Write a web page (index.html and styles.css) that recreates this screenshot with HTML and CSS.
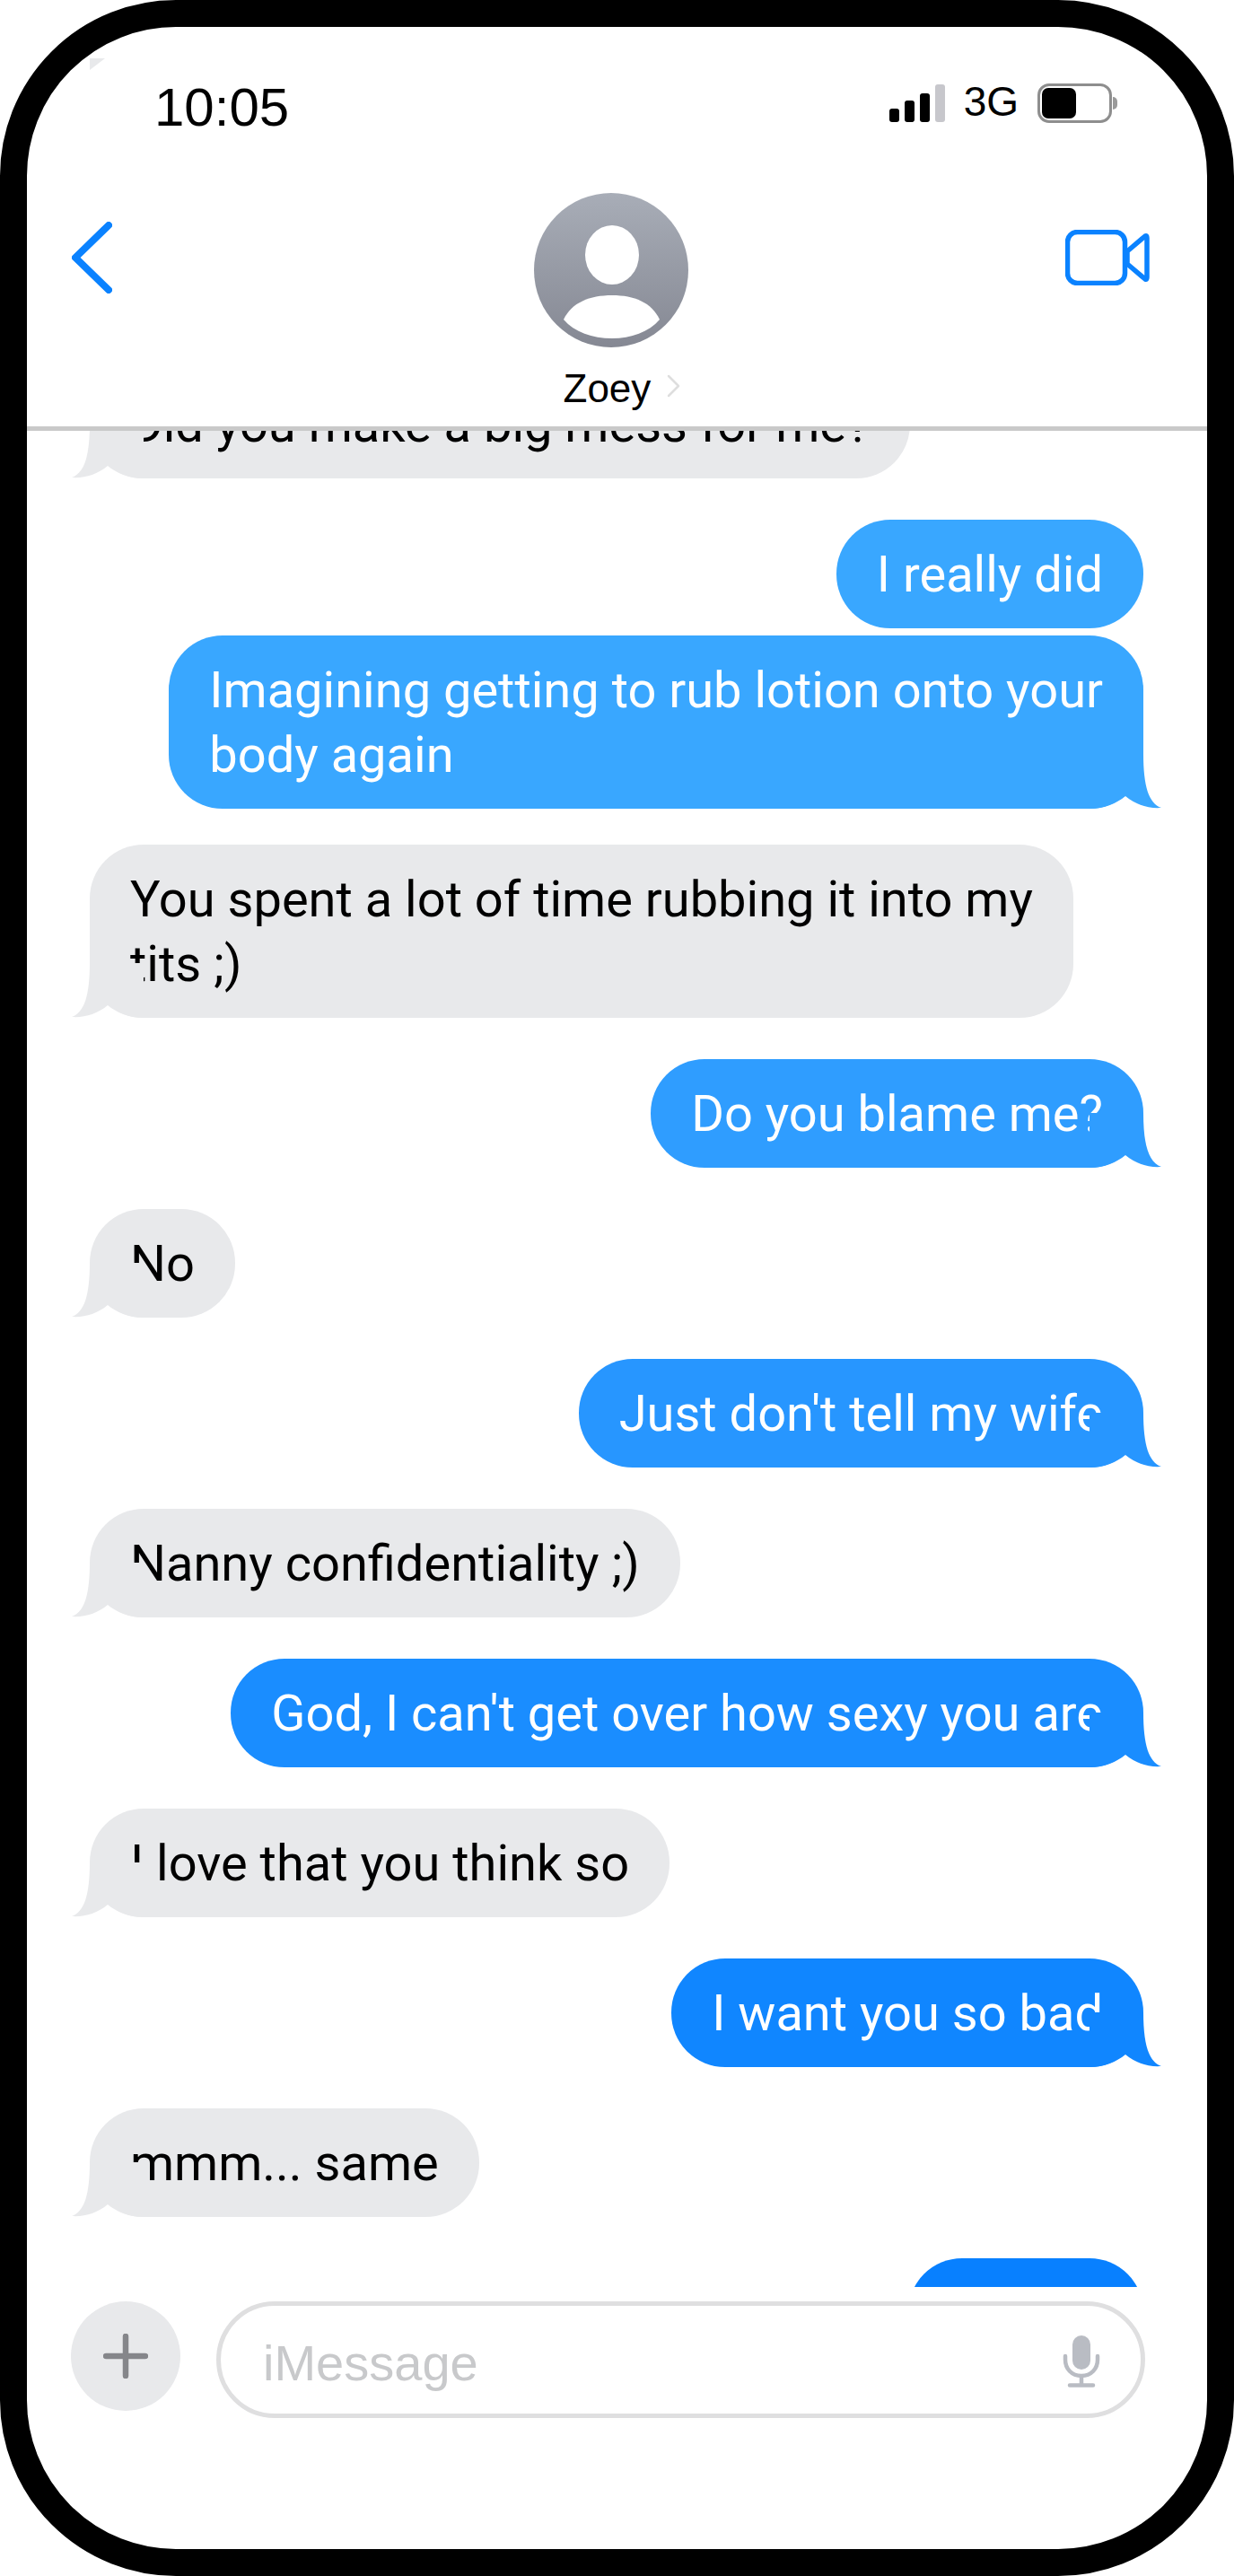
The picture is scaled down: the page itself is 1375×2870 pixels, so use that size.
FILE: index.html
```html
<!DOCTYPE html>
<html lang="en">
<head>
<meta charset="utf-8">
<title>Zoey</title>
<link rel="stylesheet" href="styles.css">
</head>
<body>
<svg class="defs" width="0" height="0" aria-hidden="true">
  <symbol id="tail" viewBox="0 0 80 61"><path d="M0 61C17 61 30 55 40 47C52 57 66 61 80 60C66 55 60 36 60 0L0 0Z"/></symbol>
</svg>
<div class="phone">
  <div class="sliver"></div>
  <header class="top">
    <div class="status">
      <span class="time">10:05</span>
      <div class="indicators">
        <div class="signal"><i class="bar b1"></i><i class="bar b2"></i><i class="bar b3"></i><i class="bar b4"></i></div>
        <span class="net">3G</span>
        <div class="battery"><div class="cell"><i class="charge"></i></div><i class="nub"></i></div>
      </div>
    </div>
    <nav class="nav">
      <svg class="back" width="45" height="80" viewBox="0 0 45 80"><path d="M41 4L4 40L41 76" transform="matrix(1 0 0 1 0 0)" fill="none" stroke="#0a82ff" stroke-width="8" stroke-linecap="round" stroke-linejoin="round"/></svg>
      <div class="contact">
        <svg class="avatar" width="172" height="172" viewBox="0 0 172 172">
          <defs>
            <linearGradient id="ag" x1="0" y1="0" x2="0" y2="1"><stop offset="0" stop-color="#a8adb7"/><stop offset="1" stop-color="#858893"/></linearGradient>
            <clipPath id="ac"><circle cx="86" cy="86" r="86"/></clipPath>
          </defs>
          <circle cx="86" cy="86" r="86" fill="url(#ag)"/>
          <ellipse cx="87" cy="69" rx="30" ry="33" fill="#fff"/>
          <path d="M33 141C42 122 62 114 87 114C112 114 131 122 140 141C128 155 108 162 87 162C65 162 45 155 33 141Z" fill="#fff"/>
        </svg>
        <div class="name-row">
          <span class="name">Zoey</span>
          <svg class="chev" width="15" height="26" viewBox="0 0 15 26"><path d="M2 2L13 13L2 24" fill="none" stroke="#dedede" stroke-width="2.5" stroke-linecap="round" stroke-linejoin="round"/></svg>
        </div>
      </div>
      <svg class="video" width="94" height="62" viewBox="0 0 94 62"><rect x="2.5" y="2.5" width="64" height="57" rx="11" fill="none" stroke="#0a82ff" stroke-width="5.5"/><path d="M69 24L89 7Q91 6 91 9L91 53Q91 56 89 55L69 38Z" fill="none" stroke="#0a82ff" stroke-width="5.5" stroke-linejoin="round"/></svg>
    </nav>
  </header>
  <main class="thread">
    <div class="list">
      <div class="bubble in">Did you make a big mess for me?<svg class="tail"><use href="#tail"/></svg></div>
      <div class="group">
        <div class="bubble out c1">I really did</div>
        <div class="bubble out c1">Imagining getting to rub lotion onto your<br>body again<svg class="tail"><use href="#tail"/></svg></div>
      </div>
      <div class="bubble in">You spent a lot of time rubbing it into my<br>tits ;)<svg class="tail"><use href="#tail"/></svg></div>
      <div class="bubble out c2">Do you blame me?<svg class="tail"><use href="#tail"/></svg></div>
      <div class="bubble in">No<svg class="tail"><use href="#tail"/></svg></div>
      <div class="bubble out c3">Just don't tell my wife<svg class="tail"><use href="#tail"/></svg></div>
      <div class="bubble in">Nanny confidentiality ;)<svg class="tail"><use href="#tail"/></svg></div>
      <div class="bubble out c4">God, I can't get over how sexy you are<svg class="tail"><use href="#tail"/></svg></div>
      <div class="bubble in">I love that you think so<svg class="tail"><use href="#tail"/></svg></div>
      <div class="bubble out c5">I want you so bad<svg class="tail"><use href="#tail"/></svg></div>
      <div class="bubble in">mmm... same<svg class="tail"><use href="#tail"/></svg></div>
      <div class="bubble out c6 last">&nbsp;</div>
    </div>
  </main>
  <footer class="composer">
    <div class="plus"><svg width="50" height="50" viewBox="0 0 50 50"><path d="M25 3V47M3 25H47" fill="none" stroke="#85868a" stroke-width="6.5" stroke-linecap="round"/></svg></div>
    <div class="field">
      <span class="placeholder">iMessage</span>
      <svg class="mic" width="42" height="58" viewBox="0 0 42 58"><rect x="11" y="0" width="20" height="38" rx="10" fill="#b9bcc3"/><path d="M3 23V27C3 37 10 45 21 45C32 45 39 37 39 27V23M21 45V55M8 55.5H34" fill="none" stroke="#b9bcc3" stroke-width="4.5" stroke-linecap="round"/></svg>
    </div>
  </footer>
</div>
</body>
</html>
```
FILE: styles.css
```css
* { box-sizing: border-box; }
html, body { margin: 0; padding: 0; background: #fff; }
.defs { display: block; height: 0; }
.phone {
  position: relative;
  width: 1375px;
  height: 2870px;
  border: 30px solid #000;
  border-radius: 196px;
  background: #fff;
  display: flex;
  flex-direction: column;
  overflow: hidden;
  font-family: "Liberation Sans", Arial, sans-serif;
  color: #000;
}
.sliver {
  position: absolute;
  left: 70px;
  top: 35px;
  width: 17px;
  height: 13px;
  background: #e8e9eb;
  clip-path: polygon(0 100%, 0 0, 100% 0);
}
.top {
  height: 450px;
  flex: none;
  border-bottom: 5px solid #c9c9c9;
  display: flex;
  flex-direction: column;
}
.status {
  height: 120px;
  padding: 60px 100px 0 142px;
  display: flex;
  justify-content: space-between;
  flex: none;
}
.time { font-size: 60px; line-height: 60px; }
.indicators { display: flex; align-items: flex-end; height: 44px; margin-top: 3px; }
.signal { display: flex; align-items: flex-end; gap: 6px; height: 42px; margin-bottom: 1px; }
.bar { display: block; width: 11px; border-radius: 3px; background: #000; }
.b1 { height: 15px; }
.b2 { height: 24px; }
.b3 { height: 32px; }
.b4 { height: 42px; background: #c7c7cc; }
.net { font-size: 46px; line-height: 46px; margin-left: 21px; margin-bottom: 1px; }
.battery { display: flex; align-items: center; margin-left: 21px; height: 44px; }
.cell { width: 83px; height: 44px; border: 3px solid #8e8e8e; border-radius: 13px; padding: 2px; }
.charge { display: block; width: 38px; height: 34px; background: #000; border-radius: 7px; }
.nub { display: block; width: 5px; height: 14px; background: #9a9a9a; border-radius: 0 5px 5px 0; margin-left: 1px; }
.nav {
  flex: 1;
  display: grid;
  grid-template-columns: 1fr 172px 1fr;
  padding: 0 64px 0 50px;
}
.back { margin-top: 97px; display: block; }
.contact { margin-top: 65px; }
.avatar { display: block; }
.name-row { display: flex; align-items: flex-start; padding-left: 33px; margin-top: 24px; white-space: nowrap; }
.name { font-size: 44px; line-height: 44px; }
.chev { display: block; margin: 6px 0 0 18px; flex: none; }
.video { justify-self: end; margin-top: 106px; display: block; }
.thread { height: 2068px; flex: none; overflow: hidden; padding: 0 71px 0 70px; }
.list { display: flex; flex-direction: column; gap: 46px; margin-top: -68px; }
.group { display: flex; flex-direction: column; gap: 8px; align-self: flex-end; align-items: flex-end; margin-bottom: -6px; }
.bubble {
  position: relative;
  width: fit-content;
  padding: 24.5px 45px;
  border-radius: 60px;
  font-family: Roboto, sans-serif;
  font-size: 56px;
  line-height: 72px;
  white-space: nowrap;
  --c: #e8e9eb;
  background: var(--c);
}
.in { align-self: flex-start; color: #000; }
.out { align-self: flex-end; color: #fff; }
.c1 { --c: #39a7ff; }
.c2 { --c: #2f9dff; }
.c3 { --c: #2796ff; }
.c4 { --c: #1a8dff; }
.c5 { --c: #1086ff; }
.c6 { --c: #0880ff; }
.last { width: 262px; }
.tail { position: absolute; bottom: 0; width: 80px; height: 61px; fill: var(--c); }
.out .tail { right: -20px; }
.in .tail { left: -20px; transform: scaleX(-1); }
.composer {
  flex: 1;
  display: flex;
  align-items: flex-start;
  gap: 40px;
  padding: 16px 69px 0 49px;
}
.plus {
  width: 122px;
  height: 122px;
  border-radius: 50%;
  background: #e8e9eb;
  display: flex;
  align-items: center;
  justify-content: center;
  flex: none;
}
.field {
  flex: 1;
  height: 130px;
  border: 5px solid #dfdfe0;
  border-radius: 65px;
  display: flex;
  align-items: center;
  justify-content: space-between;
  padding: 0 45px 0 47px;
}
.placeholder { font-size: 56px; line-height: 64px; color: #c8c9cb; margin-top: 8px; }
.mic { display: block; margin-top: 4px; }
```
